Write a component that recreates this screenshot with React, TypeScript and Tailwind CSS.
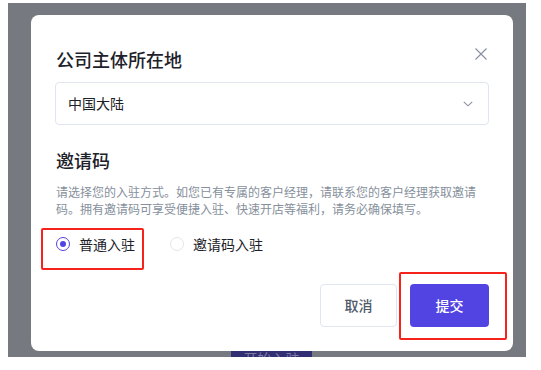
import React from "react";

const font = { fontFamily: '"Noto Sans CJK SC", "Noto Sans", sans-serif' };

export default function App() {
  return (
    <div className="w-[541px] h-[370px] bg-white pl-[8px] pt-[3px]" style={font}>
      <div className="relative w-[518px] h-[354px] bg-[#76797f] overflow-hidden">
        {/* page content behind the mask */}
        <div className="pt-[337px] pl-[223px]">
          <div className="w-[81px] h-[36px] bg-[#322e74] flex items-center justify-center text-[14px] text-[#7d7ca0]">
            开始入驻
          </div>
        </div>

        {/* dialog */}
        <div className="absolute left-[23px] top-[12px] w-[482px] h-[336px] bg-white rounded-[8px] px-[24px] pt-[31px] flex flex-col">
          <button className="absolute top-[33px] right-[26px] w-[12px] h-[12px]">
            <svg width="12" height="12" viewBox="0 0 12 12" fill="none">
              <path d="M0.5 0.5L11.5 11.5M11.5 0.5L0.5 11.5" stroke="#86909c" strokeWidth="1.1" />
            </svg>
          </button>

          <div className="text-[18px] leading-[26px] font-medium text-[#1d2129] pl-[1px]">公司主体所在地</div>

          <div className="mt-[10px] h-[43px] w-[434px] border border-[#e0e5f0] rounded-[4px] flex items-center justify-between pl-[12px] pr-[15px]">
            <span className="text-[14px] text-[#1d2129]">中国大陆</span>
            <svg width="10" height="6" viewBox="0 0 10 6" fill="none">
              <path d="M0.8 0.8L5 4.8L9.2 0.8" stroke="#86909c" strokeWidth="1.1" />
            </svg>
          </div>

          <div className="mt-[22px] text-[18px] leading-[26px] font-medium text-[#1d2129] pl-[1px]">邀请码</div>

          <p className="mt-[10px] w-[427px] pl-[1px] text-[12px] leading-[17px] text-[#86909c]">
            请选择您的入驻方式。如您已有专属的客户经理，请联系您的客户经理获取邀请码。拥有邀请码可享受便捷入驻、快速开店等福利，请务必确保填写。
          </p>

          <div className="mt-[16px] h-[22px] flex items-center">
            <div className="relative flex items-center">
              <span className="w-[14px] h-[14px] rounded-full border-[1.5px] border-[#5243e3] flex items-center justify-center ml-[1px]">
                <span className="w-[6px] h-[6px] rounded-full bg-[#5243e3]" />
              </span>
              <span className="ml-[9px] text-[14px] text-[#1d2129]">普通入驻</span>
              <div className="absolute left-[-14px] right-[-9px] top-[-6px] bottom-[-15px] border-2 border-[#f5231c] rounded-[2px] pointer-events-none" />
            </div>
            <div className="ml-[35px] flex items-center">
              <span className="w-[14px] h-[14px] rounded-full border border-[#e5e6eb]" />
              <span className="ml-[9px] text-[14px] text-[#1d2129]">邀请码入驻</span>
            </div>
          </div>

          <div className="mt-[29px] flex justify-end gap-[13px]">
            <button className="w-[77px] h-[43px] border border-[#e0e5f0] rounded-[4px] bg-white text-[14px] font-medium text-[#4e5969]">
              取消
            </button>
            <div className="relative">
              <button className="w-[79px] h-[43px] rounded-[4px] bg-[#5243e3] text-[14px] font-medium text-white">
                提交
              </button>
              <div className="absolute left-[-11px] right-[-18px] top-[-12px] bottom-[-13px] border-2 border-[#f5231c] rounded-[2px] pointer-events-none" />
            </div>
          </div>
        </div>
      </div>
    </div>
  );
}
